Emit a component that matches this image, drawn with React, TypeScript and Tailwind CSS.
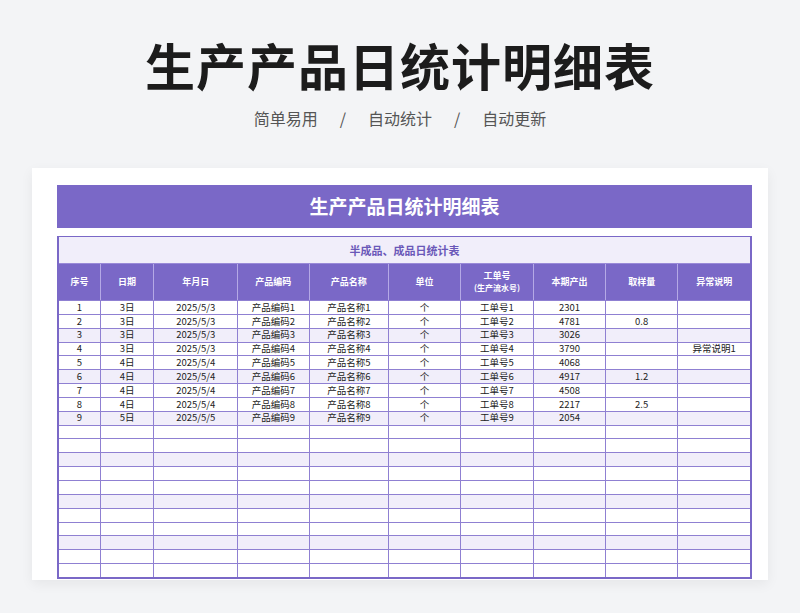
const cols = [42, 54, 84, 72, 80, 72, 74, 72, 73, 72];
const data: string[][] = [
  ["1","3日","2025/5/3","产品编码1","产品名称1","个","工单号1","2301","",""],
  ["2","3日","2025/5/3","产品编码2","产品名称2","个","工单号2","4781","0.8",""],
  ["3","3日","2025/5/3","产品编码3","产品名称3","个","工单号3","3026","",""],
  ["4","3日","2025/5/3","产品编码4","产品名称4","个","工单号4","3790","","异常说明1"],
  ["5","4日","2025/5/4","产品编码5","产品名称5","个","工单号5","4068","",""],
  ["6","4日","2025/5/4","产品编码6","产品名称6","个","工单号6","4917","1.2",""],
  ["7","4日","2025/5/4","产品编码7","产品名称7","个","工单号7","4508","",""],
  ["8","4日","2025/5/4","产品编码8","产品名称8","个","工单号8","2217","2.5",""],
  ["9","5日","2025/5/5","产品编码9","产品名称9","个","工单号9","2054","",""],
];
while (data.length < 20) data.push(["","","","","","","","","",""]);
const heads = ["序号","日期","年月日","产品编码","产品名称","单位","工单号","本期产出","取样量","异常说明"];
const font = { fontFamily: '"Noto Sans CJK SC", "Noto Sans", sans-serif' };

export default function App() {
  return (
    <div className="w-[800px] h-[613px] bg-[#f3f4f6] flex flex-col items-center" style={font}>
      <div className="h-[130px] w-full flex flex-col items-center">
        <div className="mt-[28px] text-[50px] leading-[72px] font-bold text-[#1c1c1c] tracking-[1px]">生产产品日统计明细表</div>
        <div className="mt-[6px] text-[16px] text-[#555] flex gap-[22px]">
          <span>简单易用</span><span>/</span><span>自动统计</span><span>/</span><span>自动更新</span>
        </div>
      </div>
      <div className="mt-[38px] w-[736px] h-[412px] bg-white shadow-[0_4px_12px_rgba(0,0,0,0.06)] pt-[17px] pl-[25px]">
        <div className="w-[695px] h-[43px] bg-[#7a68c7] text-white text-[19px] font-bold flex items-center justify-center">生产产品日统计明细表</div>
        <div className="mt-[8px] w-[695px] border-2 border-[#7a68c7] border-t-[1px]">
          <div className="h-[27px] bg-[#f1eefa] text-[#6a58b8] text-[11px] font-bold flex items-center justify-center border-b border-[#9a8ad8]">半成品、成品日统计表</div>
          <div className="flex h-[36px] bg-[#7a68c7] text-white text-[9px] font-bold">
            {heads.map((h, i) => (
              <div key={i} style={{ width: cols[i] }} className="flex flex-col items-center justify-center border-r border-[#b5a9e6] last:border-r-0 leading-[12px]">
                <span>{h}</span>
                {i === 6 && <span className="text-[8px]">(生产流水号)</span>}
              </div>
            ))}
          </div>
          {data.map((r, ri) => (
            <div key={ri} className={`flex h-[13.85px] border-t border-[#8f80d2] text-[9.5px] text-[#222] leading-none ${ri % 3 === 2 ? "bg-[#f1eefa]" : "bg-white"}`}>
              {r.map((c, ci) => (
                <div key={ci} style={{ width: cols[ci] }} className="flex items-center justify-center border-r border-[#8f80d2] last:border-r-0">{c}</div>
              ))}
            </div>
          ))}
        </div>
      </div>
    </div>
  );
}
